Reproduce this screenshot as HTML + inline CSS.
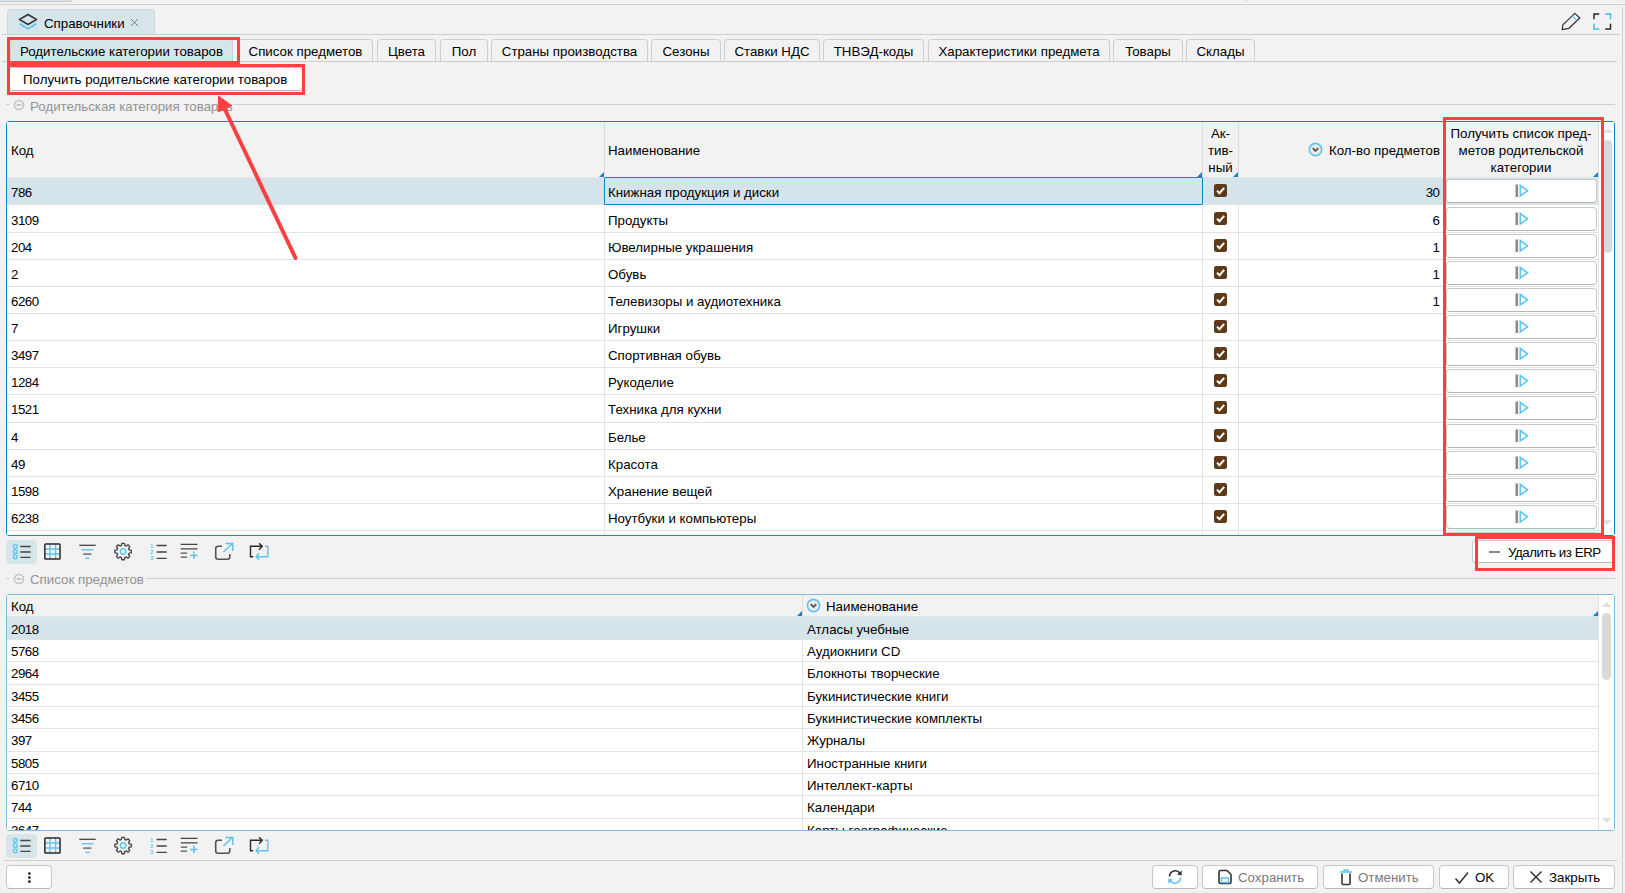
<!DOCTYPE html>
<html><head><meta charset="utf-8"><style>
html,body{margin:0;padding:0;}
body{width:1625px;height:893px;position:relative;overflow:hidden;background:#f2f2f2;font-family:"Liberation Sans",sans-serif;font-size:13.3px;color:#000;}
.t{position:absolute;white-space:nowrap;line-height:16px;}
.tab{position:absolute;top:39px;height:23px;box-sizing:border-box;border:1px solid #cfcfcf;border-bottom:none;border-radius:4px 4px 0 0;text-align:center;line-height:24px;white-space:nowrap;}
.btn{position:absolute;box-sizing:border-box;background:#fff;border:1px solid #c8c8c8;border-bottom-color:#b8b8b8;border-radius:4px;white-space:nowrap;}
.rbtn{position:absolute;width:151px;box-sizing:border-box;background:#fff;border:1px solid #c8c8c8;border-bottom-color:#b5b5b5;border-radius:4px;}
</style></head><body>
<div style="position:absolute;left:-2px;top:-2px;width:75px;height:4px;background:#d5e4e9;border:1px solid #c8c8c8;border-radius:0 0 4px 4px;box-sizing:border-box;"></div>
<div style="position:absolute;left:0px;top:4px;width:1625px;height:1px;background:#d0d0d0"></div>
<div style="position:absolute;left:1246px;top:0px;width:1px;height:2px;background:#cfcfcf"></div>
<div style="position:absolute;left:1622px;top:7px;width:1px;height:886px;background:#cfcfcf"></div>
<div style="position:absolute;left:7px;top:9px;width:148px;height:26px;background:#d5e5ea;border:1px solid #cfd6d9;border-bottom:none;border-radius:4px 4px 0 0;box-sizing:border-box;"></div>
<svg style="position:absolute;left:18px;top:13px;" width="20" height="18" viewBox="0 0 20 18"><path d="M10 1.5 L18.5 6.5 L10 11.5 L1.5 6.5 Z" fill="none" stroke="#363636" stroke-width="1.6" stroke-linejoin="round"/><path d="M1.7 10.7 L10 15.8 L18.3 10.7" fill="none" stroke="#5cc3ef" stroke-width="1.6" stroke-linejoin="round"/></svg>
<div class="t" style="left:44px;top:16px;">Справочники</div>
<svg style="position:absolute;left:130px;top:18px;" width="9" height="9" viewBox="0 0 9 9"><path d="M1 1 L8 8 M8 1 L1 8" stroke="#7a7a7a" stroke-width="1"/></svg>
<div style="position:absolute;left:2px;top:34px;width:1618px;height:1px;background:#cdcdcd"></div>
<svg style="position:absolute;left:1561px;top:12px;" width="21" height="21" viewBox="0 0 21 21"><path d="M13.8 1.4 L18.8 6 L8 16.3 L1.2 17.6 L1.8 12.9 Z" fill="none" stroke="#333" stroke-width="1.2" stroke-linejoin="round"/><path d="M11 3.9 L15.9 8.4" stroke="#5cc3ef" stroke-width="1.2"/></svg>
<svg style="position:absolute;left:1592px;top:12px;" width="21" height="21" viewBox="0 0 21 21"><path d="M2 7.3 V2 H7.3" fill="none" stroke="#2a2a2a" stroke-width="1.5"/><path d="M13.2 2 H18.5 V7.3" fill="none" stroke="#44bbef" stroke-width="1.5"/><path d="M2 11.7 V17 H7.3" fill="none" stroke="#44bbef" stroke-width="1.5"/><path d="M13.2 17 H18.5 V11.7" fill="none" stroke="#2a2a2a" stroke-width="1.5"/></svg>
<div class="tab" style="left:10px;width:223px;background:#d5e5ea">Родительские категории товаров</div>
<div class="tab" style="left:238px;width:135px;background:#f2f2f2">Список предметов</div>
<div class="tab" style="left:377px;width:59px;background:#f2f2f2">Цвета</div>
<div class="tab" style="left:440px;width:48px;background:#f2f2f2">Пол</div>
<div class="tab" style="left:491px;width:157px;background:#f2f2f2">Страны производства</div>
<div class="tab" style="left:651px;width:70px;background:#f2f2f2">Сезоны</div>
<div class="tab" style="left:724px;width:96px;background:#f2f2f2">Ставки НДС</div>
<div class="tab" style="left:823px;width:101px;background:#f2f2f2">ТНВЭД-коды</div>
<div class="tab" style="left:928px;width:182px;background:#f2f2f2">Характеристики предмета</div>
<div class="tab" style="left:1113px;width:70px;background:#f2f2f2">Товары</div>
<div class="tab" style="left:1186px;width:69px;background:#f2f2f2">Склады</div>
<div style="position:absolute;left:2px;top:61px;width:1615px;height:1px;background:#cdcdcd"></div>
<div class="btn" style="left:9px;top:67px;width:294px;height:24px;"><span style="position:absolute;left:13px;top:4px">Получить родительские категории товаров</span></div>
<div style="position:absolute;left:6px;top:104px;width:4px;height:1px;background:#cfcfcf"></div>
<svg style="position:absolute;left:13px;top:99px;" width="12" height="12" viewBox="0 0 12 12"><circle cx="6" cy="6" r="4.6" fill="none" stroke="#c2c2c2" stroke-width="1.5"/><path d="M3.6 6 H8.4" stroke="#bdbdbd" stroke-width="1.5"/></svg>
<div class="t" style="left:30px;top:99px;color:#939393">Родительская категория товаров</div>
<div style="position:absolute;left:233px;top:104px;width:1382px;height:1px;background:#cfcfcf"></div>
<div style="position:absolute;left:6px;top:121px;width:1609px;height:415px;border:1px solid #0b88c1;border-radius:3px;box-sizing:border-box;background:#fff;overflow:hidden"></div>
<div style="position:absolute;left:7px;top:122px;width:1607px;height:56px;background:#f2f2f2"></div>
<div style="position:absolute;left:604px;top:122px;width:1px;height:56px;background:#dcdcdc"></div>
<div style="position:absolute;left:1202px;top:122px;width:1px;height:56px;background:#dcdcdc"></div>
<div style="position:absolute;left:1238px;top:122px;width:1px;height:56px;background:#dcdcdc"></div>
<div style="position:absolute;left:1598px;top:122px;width:1px;height:56px;background:#dcdcdc"></div>
<svg style="position:absolute;left:599px;top:172px;" width="5" height="5" viewBox="0 0 5 5"><path d="M5 0 L5 5 L0 5 Z" fill="#0b88c1"/></svg>
<svg style="position:absolute;left:1197px;top:172px;" width="5" height="5" viewBox="0 0 5 5"><path d="M5 0 L5 5 L0 5 Z" fill="#0b88c1"/></svg>
<svg style="position:absolute;left:1233px;top:172px;" width="5" height="5" viewBox="0 0 5 5"><path d="M5 0 L5 5 L0 5 Z" fill="#0b88c1"/></svg>
<svg style="position:absolute;left:1593px;top:172px;" width="5" height="5" viewBox="0 0 5 5"><path d="M5 0 L5 5 L0 5 Z" fill="#0b88c1"/></svg>
<div class="t" style="left:11px;top:143px;">Код</div>
<div class="t" style="left:608px;top:143px;">Наименование</div>
<div class="t" style="left:1203px;width:35px;text-align:center;top:126px">Ак-</div>
<div class="t" style="left:1203px;width:35px;text-align:center;top:143px">тив-</div>
<div class="t" style="left:1203px;width:35px;text-align:center;top:160px">ный</div>
<svg style="position:absolute;left:1308px;top:142px;" width="15" height="15" viewBox="0 0 15 15"><circle cx="7.5" cy="7.5" r="6.1" fill="#ececec" stroke="#5ec4ee" stroke-width="1.6"/><path d="M4.7 6.2 L7.5 9.0 L10.3 6.2" fill="none" stroke="#555" stroke-width="1.8"/></svg>
<div class="t" style="left:1240px;width:200px;text-align:right;top:143px">Кол-во предметов</div>
<div class="t" style="left:1444px;width:154px;text-align:center;top:126px">Получить список пред-</div>
<div class="t" style="left:1444px;width:154px;text-align:center;top:143px">метов родительской</div>
<div class="t" style="left:1444px;width:154px;text-align:center;top:160px">категории</div>
<div style="position:absolute;left:7px;top:177px;width:1591px;height:28px;background:#d4e4ea"></div>
<div style="position:absolute;left:7px;top:205px;width:1591px;height:27px;background:#fff"></div>
<div style="position:absolute;left:7px;top:232px;width:1591px;height:27px;background:#fff"></div>
<div style="position:absolute;left:7px;top:259px;width:1591px;height:27px;background:#fff"></div>
<div style="position:absolute;left:7px;top:286px;width:1591px;height:27px;background:#fff"></div>
<div style="position:absolute;left:7px;top:313px;width:1591px;height:27px;background:#fff"></div>
<div style="position:absolute;left:7px;top:340px;width:1591px;height:27px;background:#fff"></div>
<div style="position:absolute;left:7px;top:367px;width:1591px;height:27px;background:#fff"></div>
<div style="position:absolute;left:7px;top:394px;width:1591px;height:28px;background:#fff"></div>
<div style="position:absolute;left:7px;top:422px;width:1591px;height:27px;background:#fff"></div>
<div style="position:absolute;left:7px;top:449px;width:1591px;height:27px;background:#fff"></div>
<div style="position:absolute;left:7px;top:476px;width:1591px;height:27px;background:#fff"></div>
<div style="position:absolute;left:7px;top:503px;width:1591px;height:27px;background:#fff"></div>
<div style="position:absolute;left:7px;top:530px;width:1591px;height:5px;background:#fff"></div>
<div style="position:absolute;left:7px;top:232px;width:1591px;height:1px;background:#e3e3e3"></div>
<div style="position:absolute;left:7px;top:259px;width:1591px;height:1px;background:#e3e3e3"></div>
<div style="position:absolute;left:7px;top:286px;width:1591px;height:1px;background:#e3e3e3"></div>
<div style="position:absolute;left:7px;top:313px;width:1591px;height:1px;background:#e3e3e3"></div>
<div style="position:absolute;left:7px;top:340px;width:1591px;height:1px;background:#e3e3e3"></div>
<div style="position:absolute;left:7px;top:367px;width:1591px;height:1px;background:#e3e3e3"></div>
<div style="position:absolute;left:7px;top:394px;width:1591px;height:1px;background:#e3e3e3"></div>
<div style="position:absolute;left:7px;top:422px;width:1591px;height:1px;background:#e3e3e3"></div>
<div style="position:absolute;left:7px;top:449px;width:1591px;height:1px;background:#e3e3e3"></div>
<div style="position:absolute;left:7px;top:476px;width:1591px;height:1px;background:#e3e3e3"></div>
<div style="position:absolute;left:7px;top:503px;width:1591px;height:1px;background:#e3e3e3"></div>
<div style="position:absolute;left:7px;top:530px;width:1591px;height:1px;background:#e3e3e3"></div>
<div style="position:absolute;left:7px;top:204px;width:1591px;height:1px;background:#e3e3e3"></div>
<div style="position:absolute;left:7px;top:177px;width:1591px;height:1px;background:#e6e6e6"></div>
<div style="position:absolute;left:604px;top:178px;width:1px;height:357px;background:#e3e3e3"></div>
<div style="position:absolute;left:1202px;top:178px;width:1px;height:357px;background:#e3e3e3"></div>
<div style="position:absolute;left:1238px;top:178px;width:1px;height:357px;background:#e3e3e3"></div>
<div style="position:absolute;left:1598px;top:178px;width:1px;height:357px;background:#e3e3e3"></div>
<div class="t" style="left:11px;top:185px;letter-spacing:-0.5px">786</div>
<div class="t" style="left:608px;top:185px;">Книжная продукция и диски</div>
<svg style="position:absolute;left:1214px;top:184px;" width="13" height="13" viewBox="0 0 13 13"><rect x="0" y="0" width="13" height="13" rx="2.2" fill="#5f3a18"/><path d="M3 6.6 L5.5 9.2 L10.2 3.9" fill="none" stroke="#fff" stroke-width="2"/></svg>
<div class="t" style="left:1299px;width:140px;text-align:right;top:185px;letter-spacing:-0.5px;margin-left:0.5px">30</div>
<div class="rbtn" style="left:1446px;top:179px;height:24px"></div>
<svg style="position:absolute;left:1513.5px;top:184px;" width="16" height="14" viewBox="0 0 16 14"><rect x="1.5" y="0.5" width="2.6" height="12.5" fill="#8a8a8a"/><path d="M6.3 1.5 L13.5 6.8 L6.3 12 Z" fill="none" stroke="#5ec4ee" stroke-width="1.6" stroke-linejoin="miter"/></svg>
<div class="t" style="left:11px;top:213px;letter-spacing:-0.5px">3109</div>
<div class="t" style="left:608px;top:213px;">Продукты</div>
<svg style="position:absolute;left:1214px;top:212px;" width="13" height="13" viewBox="0 0 13 13"><rect x="0" y="0" width="13" height="13" rx="2.2" fill="#5f3a18"/><path d="M3 6.6 L5.5 9.2 L10.2 3.9" fill="none" stroke="#fff" stroke-width="2"/></svg>
<div class="t" style="left:1299px;width:140px;text-align:right;top:213px;letter-spacing:-0.5px;margin-left:0.5px">6</div>
<div class="rbtn" style="left:1446px;top:207px;height:24px"></div>
<svg style="position:absolute;left:1513.5px;top:212px;" width="16" height="14" viewBox="0 0 16 14"><rect x="1.5" y="0.5" width="2.6" height="12.5" fill="#8a8a8a"/><path d="M6.3 1.5 L13.5 6.8 L6.3 12 Z" fill="none" stroke="#5ec4ee" stroke-width="1.6" stroke-linejoin="miter"/></svg>
<div class="t" style="left:11px;top:240px;letter-spacing:-0.5px">204</div>
<div class="t" style="left:608px;top:240px;">Ювелирные украшения</div>
<svg style="position:absolute;left:1214px;top:239px;" width="13" height="13" viewBox="0 0 13 13"><rect x="0" y="0" width="13" height="13" rx="2.2" fill="#5f3a18"/><path d="M3 6.6 L5.5 9.2 L10.2 3.9" fill="none" stroke="#fff" stroke-width="2"/></svg>
<div class="t" style="left:1299px;width:140px;text-align:right;top:240px;letter-spacing:-0.5px;margin-left:0.5px">1</div>
<div class="rbtn" style="left:1446px;top:234px;height:24px"></div>
<svg style="position:absolute;left:1513.5px;top:239px;" width="16" height="14" viewBox="0 0 16 14"><rect x="1.5" y="0.5" width="2.6" height="12.5" fill="#8a8a8a"/><path d="M6.3 1.5 L13.5 6.8 L6.3 12 Z" fill="none" stroke="#5ec4ee" stroke-width="1.6" stroke-linejoin="miter"/></svg>
<div class="t" style="left:11px;top:267px;letter-spacing:-0.5px">2</div>
<div class="t" style="left:608px;top:267px;">Обувь</div>
<svg style="position:absolute;left:1214px;top:266px;" width="13" height="13" viewBox="0 0 13 13"><rect x="0" y="0" width="13" height="13" rx="2.2" fill="#5f3a18"/><path d="M3 6.6 L5.5 9.2 L10.2 3.9" fill="none" stroke="#fff" stroke-width="2"/></svg>
<div class="t" style="left:1299px;width:140px;text-align:right;top:267px;letter-spacing:-0.5px;margin-left:0.5px">1</div>
<div class="rbtn" style="left:1446px;top:261px;height:24px"></div>
<svg style="position:absolute;left:1513.5px;top:266px;" width="16" height="14" viewBox="0 0 16 14"><rect x="1.5" y="0.5" width="2.6" height="12.5" fill="#8a8a8a"/><path d="M6.3 1.5 L13.5 6.8 L6.3 12 Z" fill="none" stroke="#5ec4ee" stroke-width="1.6" stroke-linejoin="miter"/></svg>
<div class="t" style="left:11px;top:294px;letter-spacing:-0.5px">6260</div>
<div class="t" style="left:608px;top:294px;">Телевизоры и аудиотехника</div>
<svg style="position:absolute;left:1214px;top:293px;" width="13" height="13" viewBox="0 0 13 13"><rect x="0" y="0" width="13" height="13" rx="2.2" fill="#5f3a18"/><path d="M3 6.6 L5.5 9.2 L10.2 3.9" fill="none" stroke="#fff" stroke-width="2"/></svg>
<div class="t" style="left:1299px;width:140px;text-align:right;top:294px;letter-spacing:-0.5px;margin-left:0.5px">1</div>
<div class="rbtn" style="left:1446px;top:288px;height:24px"></div>
<svg style="position:absolute;left:1513.5px;top:293px;" width="16" height="14" viewBox="0 0 16 14"><rect x="1.5" y="0.5" width="2.6" height="12.5" fill="#8a8a8a"/><path d="M6.3 1.5 L13.5 6.8 L6.3 12 Z" fill="none" stroke="#5ec4ee" stroke-width="1.6" stroke-linejoin="miter"/></svg>
<div class="t" style="left:11px;top:321px;letter-spacing:-0.5px">7</div>
<div class="t" style="left:608px;top:321px;">Игрушки</div>
<svg style="position:absolute;left:1214px;top:320px;" width="13" height="13" viewBox="0 0 13 13"><rect x="0" y="0" width="13" height="13" rx="2.2" fill="#5f3a18"/><path d="M3 6.6 L5.5 9.2 L10.2 3.9" fill="none" stroke="#fff" stroke-width="2"/></svg>
<div class="rbtn" style="left:1446px;top:315px;height:24px"></div>
<svg style="position:absolute;left:1513.5px;top:320px;" width="16" height="14" viewBox="0 0 16 14"><rect x="1.5" y="0.5" width="2.6" height="12.5" fill="#8a8a8a"/><path d="M6.3 1.5 L13.5 6.8 L6.3 12 Z" fill="none" stroke="#5ec4ee" stroke-width="1.6" stroke-linejoin="miter"/></svg>
<div class="t" style="left:11px;top:348px;letter-spacing:-0.5px">3497</div>
<div class="t" style="left:608px;top:348px;">Спортивная обувь</div>
<svg style="position:absolute;left:1214px;top:347px;" width="13" height="13" viewBox="0 0 13 13"><rect x="0" y="0" width="13" height="13" rx="2.2" fill="#5f3a18"/><path d="M3 6.6 L5.5 9.2 L10.2 3.9" fill="none" stroke="#fff" stroke-width="2"/></svg>
<div class="rbtn" style="left:1446px;top:342px;height:24px"></div>
<svg style="position:absolute;left:1513.5px;top:347px;" width="16" height="14" viewBox="0 0 16 14"><rect x="1.5" y="0.5" width="2.6" height="12.5" fill="#8a8a8a"/><path d="M6.3 1.5 L13.5 6.8 L6.3 12 Z" fill="none" stroke="#5ec4ee" stroke-width="1.6" stroke-linejoin="miter"/></svg>
<div class="t" style="left:11px;top:375px;letter-spacing:-0.5px">1284</div>
<div class="t" style="left:608px;top:375px;">Рукоделие</div>
<svg style="position:absolute;left:1214px;top:374px;" width="13" height="13" viewBox="0 0 13 13"><rect x="0" y="0" width="13" height="13" rx="2.2" fill="#5f3a18"/><path d="M3 6.6 L5.5 9.2 L10.2 3.9" fill="none" stroke="#fff" stroke-width="2"/></svg>
<div class="rbtn" style="left:1446px;top:369px;height:24px"></div>
<svg style="position:absolute;left:1513.5px;top:374px;" width="16" height="14" viewBox="0 0 16 14"><rect x="1.5" y="0.5" width="2.6" height="12.5" fill="#8a8a8a"/><path d="M6.3 1.5 L13.5 6.8 L6.3 12 Z" fill="none" stroke="#5ec4ee" stroke-width="1.6" stroke-linejoin="miter"/></svg>
<div class="t" style="left:11px;top:402px;letter-spacing:-0.5px">1521</div>
<div class="t" style="left:608px;top:402px;">Техника для кухни</div>
<svg style="position:absolute;left:1214px;top:401px;" width="13" height="13" viewBox="0 0 13 13"><rect x="0" y="0" width="13" height="13" rx="2.2" fill="#5f3a18"/><path d="M3 6.6 L5.5 9.2 L10.2 3.9" fill="none" stroke="#fff" stroke-width="2"/></svg>
<div class="rbtn" style="left:1446px;top:396px;height:24px"></div>
<svg style="position:absolute;left:1513.5px;top:401px;" width="16" height="14" viewBox="0 0 16 14"><rect x="1.5" y="0.5" width="2.6" height="12.5" fill="#8a8a8a"/><path d="M6.3 1.5 L13.5 6.8 L6.3 12 Z" fill="none" stroke="#5ec4ee" stroke-width="1.6" stroke-linejoin="miter"/></svg>
<div class="t" style="left:11px;top:430px;letter-spacing:-0.5px">4</div>
<div class="t" style="left:608px;top:430px;">Белье</div>
<svg style="position:absolute;left:1214px;top:429px;" width="13" height="13" viewBox="0 0 13 13"><rect x="0" y="0" width="13" height="13" rx="2.2" fill="#5f3a18"/><path d="M3 6.6 L5.5 9.2 L10.2 3.9" fill="none" stroke="#fff" stroke-width="2"/></svg>
<div class="rbtn" style="left:1446px;top:424px;height:24px"></div>
<svg style="position:absolute;left:1513.5px;top:429px;" width="16" height="14" viewBox="0 0 16 14"><rect x="1.5" y="0.5" width="2.6" height="12.5" fill="#8a8a8a"/><path d="M6.3 1.5 L13.5 6.8 L6.3 12 Z" fill="none" stroke="#5ec4ee" stroke-width="1.6" stroke-linejoin="miter"/></svg>
<div class="t" style="left:11px;top:457px;letter-spacing:-0.5px">49</div>
<div class="t" style="left:608px;top:457px;">Красота</div>
<svg style="position:absolute;left:1214px;top:456px;" width="13" height="13" viewBox="0 0 13 13"><rect x="0" y="0" width="13" height="13" rx="2.2" fill="#5f3a18"/><path d="M3 6.6 L5.5 9.2 L10.2 3.9" fill="none" stroke="#fff" stroke-width="2"/></svg>
<div class="rbtn" style="left:1446px;top:451px;height:24px"></div>
<svg style="position:absolute;left:1513.5px;top:456px;" width="16" height="14" viewBox="0 0 16 14"><rect x="1.5" y="0.5" width="2.6" height="12.5" fill="#8a8a8a"/><path d="M6.3 1.5 L13.5 6.8 L6.3 12 Z" fill="none" stroke="#5ec4ee" stroke-width="1.6" stroke-linejoin="miter"/></svg>
<div class="t" style="left:11px;top:484px;letter-spacing:-0.5px">1598</div>
<div class="t" style="left:608px;top:484px;">Хранение вещей</div>
<svg style="position:absolute;left:1214px;top:483px;" width="13" height="13" viewBox="0 0 13 13"><rect x="0" y="0" width="13" height="13" rx="2.2" fill="#5f3a18"/><path d="M3 6.6 L5.5 9.2 L10.2 3.9" fill="none" stroke="#fff" stroke-width="2"/></svg>
<div class="rbtn" style="left:1446px;top:478px;height:24px"></div>
<svg style="position:absolute;left:1513.5px;top:483px;" width="16" height="14" viewBox="0 0 16 14"><rect x="1.5" y="0.5" width="2.6" height="12.5" fill="#8a8a8a"/><path d="M6.3 1.5 L13.5 6.8 L6.3 12 Z" fill="none" stroke="#5ec4ee" stroke-width="1.6" stroke-linejoin="miter"/></svg>
<div class="t" style="left:11px;top:511px;letter-spacing:-0.5px">6238</div>
<div class="t" style="left:608px;top:511px;">Ноутбуки и компьютеры</div>
<svg style="position:absolute;left:1214px;top:510px;" width="13" height="13" viewBox="0 0 13 13"><rect x="0" y="0" width="13" height="13" rx="2.2" fill="#5f3a18"/><path d="M3 6.6 L5.5 9.2 L10.2 3.9" fill="none" stroke="#fff" stroke-width="2"/></svg>
<div class="rbtn" style="left:1446px;top:505px;height:24px"></div>
<svg style="position:absolute;left:1513.5px;top:510px;" width="16" height="14" viewBox="0 0 16 14"><rect x="1.5" y="0.5" width="2.6" height="12.5" fill="#8a8a8a"/><path d="M6.3 1.5 L13.5 6.8 L6.3 12 Z" fill="none" stroke="#5ec4ee" stroke-width="1.6" stroke-linejoin="miter"/></svg>
<div class="rbtn" style="left:1446px;top:532px;height:3px"></div>
<div style="position:absolute;left:604px;top:177px;width:599px;height:28px;border:1px solid #0b88c1;border-radius:1px;box-sizing:border-box"></div>
<div style="position:absolute;left:1599px;top:122px;width:15px;height:413px;background:#fff"></div>
<svg style="position:absolute;left:1602px;top:126px;" width="12" height="8" viewBox="0 0 12 8"><path d="M1 7 L6 2 L11 7 Z" fill="#e0e0e0"/></svg>
<div style="position:absolute;left:1603px;top:140px;width:9px;height:113px;background:#d9d9d9;border-radius:5px"></div>
<svg style="position:absolute;left:1601px;top:519px;" width="12" height="8" viewBox="0 0 12 8"><path d="M1 1 L6 6 L11 1 Z" fill="#e0e0e0"/></svg>
<div style="position:absolute;left:6px;top:540px;width:31px;height:24px;background:#d5e5ea;border-radius:4px"></div>
<svg style="position:absolute;left:10px;top:540px;" width="24" height="24" viewBox="0 0 24 24"><circle cx="5.3" cy="6.2" r="1.9" fill="none" stroke="#5ec4ee" stroke-width="1.3"/><circle cx="5.3" cy="11.5" r="1.9" fill="none" stroke="#5ec4ee" stroke-width="1.3"/><circle cx="5.3" cy="16.7" r="1.9" fill="none" stroke="#5ec4ee" stroke-width="1.3"/><path d="M10.3 6.5 H20.6 M10.3 12 H20.6 M10.3 17.3 H20.6" stroke="#444" stroke-width="1.3"/></svg>
<svg style="position:absolute;left:40px;top:540px;" width="24" height="24" viewBox="0 0 24 24"><path d="M10 3.5 V19 M15.6 3.5 V19 M4.5 9 H20 M4.5 14 H20" stroke="#5ec4ee" stroke-width="1.3"/><rect x="4.85" y="4.05" width="15.2" height="15" rx="0.8" fill="none" stroke="#2a2a2a" stroke-width="1.5"/></svg>
<svg style="position:absolute;left:76px;top:540px;" width="24" height="24" viewBox="0 0 24 24"><path d="M3.3 5.3 H19.7" stroke="#444" stroke-width="1.3"/><path d="M5.5 9.8 H17.5" stroke="#5ec4ee" stroke-width="1.4"/><path d="M7.2 14.1 H15.4" stroke="#555" stroke-width="1.3"/><path d="M9.3 18.4 H13.7" stroke="#5ec4ee" stroke-width="1.3"/></svg>
<svg style="position:absolute;left:111px;top:540px;" width="24" height="24" viewBox="0 0 24 24"><path d="M10.47 5.41 L10.80 3.30 L13.40 3.30 L13.73 5.41 L15.25 6.04 L16.98 4.79 L18.81 6.62 L17.56 8.35 L18.19 9.87 L20.30 10.20 L20.30 12.80 L18.19 13.13 L17.56 14.65 L18.81 16.38 L16.98 18.21 L15.25 16.96 L13.73 17.59 L13.40 19.70 L10.80 19.70 L10.47 17.59 L8.95 16.96 L7.22 18.21 L5.39 16.38 L6.64 14.65 L6.01 13.13 L3.90 12.80 L3.90 10.20 L6.01 9.87 L6.64 8.35 L5.39 6.62 L7.22 4.79 L8.95 6.04 Z" fill="none" stroke="#444" stroke-width="1.35" stroke-linejoin="round"/><circle cx="12.1" cy="11.5" r="2.7" fill="none" stroke="#5ec4ee" stroke-width="1.5"/></svg>
<svg style="position:absolute;left:147px;top:540px;" width="24" height="24" viewBox="0 0 24 24"><text x="4.6" y="7.5" text-anchor="middle" font-size="5.2" font-family="Liberation Sans" font-weight="bold" fill="#5ec4ee">1</text><text x="4.6" y="14" text-anchor="middle" font-size="5.2" font-family="Liberation Sans" font-weight="bold" fill="#5ec4ee">2</text><text x="4.6" y="20" text-anchor="middle" font-size="5.2" font-family="Liberation Sans" font-weight="bold" fill="#5ec4ee">3</text><path d="M9.6 5.5 H19.7 M9.6 12 H19.7 M9.6 18.4 H19.7" stroke="#444" stroke-width="1.3"/></svg>
<svg style="position:absolute;left:177px;top:540px;" width="24" height="24" viewBox="0 0 24 24"><path d="M3.7 4.4 H20.5 M3.7 8.8 H20.5" stroke="#444" stroke-width="1.3"/><path d="M3.7 13.1 H10.2 M3.7 17.1 H10.2" stroke="#555" stroke-width="1.3"/><path d="M13.2 15.4 H20.5 M16.9 11.6 V19" stroke="#5ec4ee" stroke-width="1.5"/></svg>
<svg style="position:absolute;left:212px;top:540px;" width="24" height="24" viewBox="0 0 24 24"><path d="M10 6.3 H6.2 Q3.7 6.3 3.7 8.8 V16.8 Q3.7 19.3 6.2 19.3 H15.3 Q17.8 19.3 17.8 16.8 V14" fill="none" stroke="#555" stroke-width="1.6"/><path d="M11.4 12 L20.6 3.3 M13.5 3.6 H20.8 V11" fill="none" stroke="#5ec4ee" stroke-width="1.5"/></svg>
<svg style="position:absolute;left:247px;top:540px;" width="24" height="24" viewBox="0 0 24 24"><path d="M6.2 16.7 H3.5 V6.3 H15 M12.1 3.3 L15.2 6.3 L12.1 9.8" fill="none" stroke="#2a2a2a" stroke-width="1.4"/><path d="M18 6.3 H20.8 V16.7 H9.5 M12.1 13.2 L9.1 16.7 L12.1 19.7" fill="none" stroke="#5ec4ee" stroke-width="1.4"/></svg>
<div class="btn" style="left:1472px;top:540px;width:142px;height:23px;"></div>
<div style="position:absolute;left:1489px;top:551px;width:11px;height:2px;background:#8a8a8a"></div>
<div class="t" style="left:1508px;top:545px;letter-spacing:-0.45px">Удалить из ERP</div>
<div style="position:absolute;left:6px;top:578px;width:4px;height:1px;background:#cfcfcf"></div>
<svg style="position:absolute;left:13px;top:573px;" width="12" height="12" viewBox="0 0 12 12"><circle cx="6" cy="6" r="4.6" fill="none" stroke="#c2c2c2" stroke-width="1.5"/><path d="M3.6 6 H8.4" stroke="#bdbdbd" stroke-width="1.5"/></svg>
<div class="t" style="left:30px;top:572px;color:#939393">Список предметов</div>
<div style="position:absolute;left:146px;top:578px;width:1469px;height:1px;background:#cfcfcf"></div>
<div style="position:absolute;left:6px;top:594px;width:1609px;height:237px;border:1px solid #7fbbd6;border-radius:3px;box-sizing:border-box;background:#fff;overflow:hidden"></div>
<div style="position:absolute;left:7px;top:595px;width:1591px;height:21px;background:#f2f2f2"></div>
<div style="position:absolute;left:1598px;top:595px;width:16px;height:235px;background:#fff"></div>
<div style="position:absolute;left:802px;top:595px;width:1px;height:21px;background:#dcdcdc"></div>
<div style="position:absolute;left:1598px;top:595px;width:1px;height:235px;background:#e3e3e3"></div>
<svg style="position:absolute;left:797px;top:611px;" width="5" height="5" viewBox="0 0 5 5"><path d="M5 0 L5 5 L0 5 Z" fill="#0b88c1"/></svg>
<svg style="position:absolute;left:1593px;top:611px;" width="5" height="5" viewBox="0 0 5 5"><path d="M5 0 L5 5 L0 5 Z" fill="#0b88c1"/></svg>
<div class="t" style="left:11px;top:599px;">Код</div>
<svg style="position:absolute;left:806px;top:598px;" width="15" height="15" viewBox="0 0 15 15"><circle cx="7.5" cy="7.5" r="6.1" fill="#ececec" stroke="#5ec4ee" stroke-width="1.6"/><path d="M4.7 6.2 L7.5 9.0 L10.3 6.2" fill="none" stroke="#555" stroke-width="1.8"/></svg>
<div class="t" style="left:826px;top:599px;">Наименование</div>
<div style="position:absolute;left:7px;top:617px;width:1591px;height:23px;background:#d4e4ea"></div>
<div style="position:absolute;left:7px;top:640px;width:1591px;height:22px;background:#fff"></div>
<div style="position:absolute;left:7px;top:662px;width:1591px;height:23px;background:#fff"></div>
<div style="position:absolute;left:7px;top:685px;width:1591px;height:22px;background:#fff"></div>
<div style="position:absolute;left:7px;top:707px;width:1591px;height:22px;background:#fff"></div>
<div style="position:absolute;left:7px;top:729px;width:1591px;height:23px;background:#fff"></div>
<div style="position:absolute;left:7px;top:752px;width:1591px;height:22px;background:#fff"></div>
<div style="position:absolute;left:7px;top:774px;width:1591px;height:22px;background:#fff"></div>
<div style="position:absolute;left:7px;top:796px;width:1591px;height:23px;background:#fff"></div>
<div style="position:absolute;left:7px;top:819px;width:1591px;height:11px;background:#fff"></div>
<div style="position:absolute;left:7px;top:616px;width:1591px;height:1px;background:#e6e6e6"></div>
<div style="position:absolute;left:7px;top:639px;width:1591px;height:1px;background:#e3e3e3"></div>
<div style="position:absolute;left:7px;top:661px;width:1591px;height:1px;background:#e3e3e3"></div>
<div style="position:absolute;left:7px;top:684px;width:1591px;height:1px;background:#e3e3e3"></div>
<div style="position:absolute;left:7px;top:706px;width:1591px;height:1px;background:#e3e3e3"></div>
<div style="position:absolute;left:7px;top:728px;width:1591px;height:1px;background:#e3e3e3"></div>
<div style="position:absolute;left:7px;top:751px;width:1591px;height:1px;background:#e3e3e3"></div>
<div style="position:absolute;left:7px;top:773px;width:1591px;height:1px;background:#e3e3e3"></div>
<div style="position:absolute;left:7px;top:795px;width:1591px;height:1px;background:#e3e3e3"></div>
<div style="position:absolute;left:7px;top:818px;width:1591px;height:1px;background:#e3e3e3"></div>
<div style="position:absolute;left:802px;top:616px;width:1px;height:214px;background:#e3e3e3"></div>
<div style="position:absolute;left:7px;top:595px;width:1591px;height:235px;overflow:hidden"><div class="t" style="left:4px;top:27px;letter-spacing:-0.5px">2018</div><div class="t" style="left:800px;top:27px">Атласы учебные</div></div>
<div style="position:absolute;left:7px;top:595px;width:1591px;height:235px;overflow:hidden"><div class="t" style="left:4px;top:49px;letter-spacing:-0.5px">5768</div><div class="t" style="left:800px;top:49px">Аудиокниги CD</div></div>
<div style="position:absolute;left:7px;top:595px;width:1591px;height:235px;overflow:hidden"><div class="t" style="left:4px;top:71px;letter-spacing:-0.5px">2964</div><div class="t" style="left:800px;top:71px">Блокноты творческие</div></div>
<div style="position:absolute;left:7px;top:595px;width:1591px;height:235px;overflow:hidden"><div class="t" style="left:4px;top:94px;letter-spacing:-0.5px">3455</div><div class="t" style="left:800px;top:94px">Букинистические книги</div></div>
<div style="position:absolute;left:7px;top:595px;width:1591px;height:235px;overflow:hidden"><div class="t" style="left:4px;top:116px;letter-spacing:-0.5px">3456</div><div class="t" style="left:800px;top:116px">Букинистические комплекты</div></div>
<div style="position:absolute;left:7px;top:595px;width:1591px;height:235px;overflow:hidden"><div class="t" style="left:4px;top:138px;letter-spacing:-0.5px">397</div><div class="t" style="left:800px;top:138px">Журналы</div></div>
<div style="position:absolute;left:7px;top:595px;width:1591px;height:235px;overflow:hidden"><div class="t" style="left:4px;top:161px;letter-spacing:-0.5px">5805</div><div class="t" style="left:800px;top:161px">Иностранные книги</div></div>
<div style="position:absolute;left:7px;top:595px;width:1591px;height:235px;overflow:hidden"><div class="t" style="left:4px;top:183px;letter-spacing:-0.5px">6710</div><div class="t" style="left:800px;top:183px">Интеллект-карты</div></div>
<div style="position:absolute;left:7px;top:595px;width:1591px;height:235px;overflow:hidden"><div class="t" style="left:4px;top:205px;letter-spacing:-0.5px">744</div><div class="t" style="left:800px;top:205px">Календари</div></div>
<div style="position:absolute;left:7px;top:595px;width:1591px;height:235px;overflow:hidden"><div class="t" style="left:4px;top:228px;letter-spacing:-0.5px">3647</div><div class="t" style="left:800px;top:228px">Карты географические</div></div>
<svg style="position:absolute;left:1600px;top:600px;" width="14" height="8" viewBox="0 0 14 8"><path d="M1.5 7 L6.5 2 L11.5 7 Z" fill="#e0e0e0"/></svg>
<div style="position:absolute;left:1602px;top:613px;width:9px;height:67px;background:#d9d9d9;border-radius:5px"></div>
<svg style="position:absolute;left:1600px;top:817px;" width="14" height="8" viewBox="0 0 14 8"><path d="M1.5 1 L6.5 6 L11.5 1 Z" fill="#e0e0e0"/></svg>
<div style="position:absolute;left:6px;top:834px;width:31px;height:24px;background:#d5e5ea;border-radius:4px"></div>
<svg style="position:absolute;left:10px;top:834px;" width="24" height="24" viewBox="0 0 24 24"><circle cx="5.3" cy="6.2" r="1.9" fill="none" stroke="#5ec4ee" stroke-width="1.3"/><circle cx="5.3" cy="11.5" r="1.9" fill="none" stroke="#5ec4ee" stroke-width="1.3"/><circle cx="5.3" cy="16.7" r="1.9" fill="none" stroke="#5ec4ee" stroke-width="1.3"/><path d="M10.3 6.5 H20.6 M10.3 12 H20.6 M10.3 17.3 H20.6" stroke="#444" stroke-width="1.3"/></svg>
<svg style="position:absolute;left:40px;top:834px;" width="24" height="24" viewBox="0 0 24 24"><path d="M10 3.5 V19 M15.6 3.5 V19 M4.5 9 H20 M4.5 14 H20" stroke="#5ec4ee" stroke-width="1.3"/><rect x="4.85" y="4.05" width="15.2" height="15" rx="0.8" fill="none" stroke="#2a2a2a" stroke-width="1.5"/></svg>
<svg style="position:absolute;left:76px;top:834px;" width="24" height="24" viewBox="0 0 24 24"><path d="M3.3 5.3 H19.7" stroke="#444" stroke-width="1.3"/><path d="M5.5 9.8 H17.5" stroke="#5ec4ee" stroke-width="1.4"/><path d="M7.2 14.1 H15.4" stroke="#555" stroke-width="1.3"/><path d="M9.3 18.4 H13.7" stroke="#5ec4ee" stroke-width="1.3"/></svg>
<svg style="position:absolute;left:111px;top:834px;" width="24" height="24" viewBox="0 0 24 24"><path d="M10.47 5.41 L10.80 3.30 L13.40 3.30 L13.73 5.41 L15.25 6.04 L16.98 4.79 L18.81 6.62 L17.56 8.35 L18.19 9.87 L20.30 10.20 L20.30 12.80 L18.19 13.13 L17.56 14.65 L18.81 16.38 L16.98 18.21 L15.25 16.96 L13.73 17.59 L13.40 19.70 L10.80 19.70 L10.47 17.59 L8.95 16.96 L7.22 18.21 L5.39 16.38 L6.64 14.65 L6.01 13.13 L3.90 12.80 L3.90 10.20 L6.01 9.87 L6.64 8.35 L5.39 6.62 L7.22 4.79 L8.95 6.04 Z" fill="none" stroke="#444" stroke-width="1.35" stroke-linejoin="round"/><circle cx="12.1" cy="11.5" r="2.7" fill="none" stroke="#5ec4ee" stroke-width="1.5"/></svg>
<svg style="position:absolute;left:147px;top:834px;" width="24" height="24" viewBox="0 0 24 24"><text x="4.6" y="7.5" text-anchor="middle" font-size="5.2" font-family="Liberation Sans" font-weight="bold" fill="#5ec4ee">1</text><text x="4.6" y="14" text-anchor="middle" font-size="5.2" font-family="Liberation Sans" font-weight="bold" fill="#5ec4ee">2</text><text x="4.6" y="20" text-anchor="middle" font-size="5.2" font-family="Liberation Sans" font-weight="bold" fill="#5ec4ee">3</text><path d="M9.6 5.5 H19.7 M9.6 12 H19.7 M9.6 18.4 H19.7" stroke="#444" stroke-width="1.3"/></svg>
<svg style="position:absolute;left:177px;top:834px;" width="24" height="24" viewBox="0 0 24 24"><path d="M3.7 4.4 H20.5 M3.7 8.8 H20.5" stroke="#444" stroke-width="1.3"/><path d="M3.7 13.1 H10.2 M3.7 17.1 H10.2" stroke="#555" stroke-width="1.3"/><path d="M13.2 15.4 H20.5 M16.9 11.6 V19" stroke="#5ec4ee" stroke-width="1.5"/></svg>
<svg style="position:absolute;left:212px;top:834px;" width="24" height="24" viewBox="0 0 24 24"><path d="M10 6.3 H6.2 Q3.7 6.3 3.7 8.8 V16.8 Q3.7 19.3 6.2 19.3 H15.3 Q17.8 19.3 17.8 16.8 V14" fill="none" stroke="#555" stroke-width="1.6"/><path d="M11.4 12 L20.6 3.3 M13.5 3.6 H20.8 V11" fill="none" stroke="#5ec4ee" stroke-width="1.5"/></svg>
<svg style="position:absolute;left:247px;top:834px;" width="24" height="24" viewBox="0 0 24 24"><path d="M6.2 16.7 H3.5 V6.3 H15 M12.1 3.3 L15.2 6.3 L12.1 9.8" fill="none" stroke="#2a2a2a" stroke-width="1.4"/><path d="M18 6.3 H20.8 V16.7 H9.5 M12.1 13.2 L9.1 16.7 L12.1 19.7" fill="none" stroke="#5ec4ee" stroke-width="1.4"/></svg>
<div style="position:absolute;left:4px;top:860px;width:1613px;height:1px;background:#cfcfcf"></div>
<div class="btn" style="left:6px;top:865px;width:46px;height:24px;"></div>
<svg style="position:absolute;left:26px;top:870px;" width="6" height="14" viewBox="0 0 6 14"><circle cx="3.4" cy="3.5" r="1.3" fill="#111"/><circle cx="3.4" cy="7.6" r="1.3" fill="#111"/><circle cx="3.4" cy="11.6" r="1.3" fill="#111"/></svg>
<div class="btn" style="left:1152px;top:865px;width:46px;height:24px;"></div>
<svg style="position:absolute;left:1166px;top:868px;" width="18" height="18" viewBox="0 0 18 18"><path d="M3.5 8.5 A5.8 5.8 0 0 1 14 5.2" fill="none" stroke="#333" stroke-width="1.6"/><path d="M15.8 2.4 L15.6 7.4 L11 6.6 Z" fill="#333"/><path d="M14.5 9.5 A5.8 5.8 0 0 1 4 12.8" fill="none" stroke="#5ec4ee" stroke-width="1.6"/><path d="M2.2 15.6 L2.4 10.6 L7 11.4 Z" fill="#5ec4ee"/></svg>
<div class="btn" style="left:1202px;top:865px;width:116px;height:24px;"></div>
<svg style="position:absolute;left:1217px;top:869px;" width="16" height="16" viewBox="0 0 16 16"><path d="M2 3 Q2 1.5 3.5 1.5 H10 L14 5.5 V13 Q14 14.5 12.5 14.5 H3.5 Q2 14.5 2 13 Z" fill="none" stroke="#333" stroke-width="1.6"/><path d="M4.5 9 H11.5 V13.5 H4.5 Z" fill="none" stroke="#5ec4ee" stroke-width="1.4"/></svg>
<div class="t" style="left:1238px;top:870px;color:#7a7a7a">Сохранить</div>
<div class="btn" style="left:1323px;top:865px;width:111px;height:24px;"></div>
<svg style="position:absolute;left:1338px;top:868px;" width="16" height="18" viewBox="0 0 16 18"><path d="M2 4 H14 M6 4 V2 H10 V4" fill="none" stroke="#5ec4ee" stroke-width="1.4"/><path d="M4 5.5 V15.5 Q4 16.5 5 16.5 H11 Q12 16.5 12 15.5 V5.5" fill="none" stroke="#333" stroke-width="1.6"/></svg>
<div class="t" style="left:1358px;top:870px;color:#7a7a7a">Отменить</div>
<div class="btn" style="left:1439px;top:865px;width:70px;height:24px;"></div>
<svg style="position:absolute;left:1454px;top:871px;" width="16" height="14" viewBox="0 0 16 14"><path d="M1.5 7.5 L5.5 12 L14 1.5" fill="none" stroke="#333" stroke-width="1.5"/></svg>
<div class="t" style="left:1475px;top:870px;">OK</div>
<div class="btn" style="left:1513px;top:865px;width:102px;height:24px;"></div>
<svg style="position:absolute;left:1529px;top:870px;" width="14" height="14" viewBox="0 0 14 14"><path d="M1.5 1.5 L12.5 12.5 M12.5 1.5 L1.5 12.5" stroke="#333" stroke-width="1.5"/></svg>
<div class="t" style="left:1549px;top:870px;">Закрыть</div>
<div style="position:absolute;left:7px;top:37px;width:233px;height:27px;border:3px solid #fc3f3f;box-sizing:border-box"></div>
<div style="position:absolute;left:7px;top:64px;width:298px;height:31px;border:3px solid #fc3f3f;box-sizing:border-box"></div>
<div style="position:absolute;left:1443px;top:117px;width:161px;height:419px;border:3px solid #fc3f3f;box-sizing:border-box"></div>
<div style="position:absolute;left:1475px;top:536px;width:140px;height:35px;border:3px solid #fc3f3f;box-sizing:border-box"></div>
<svg style="position:absolute;left:0px;top:0px;pointer-events:none" width="1625" height="893" viewBox="0 0 1625 893"><path d="M295.5 258 L224.5 108.5" stroke="#fc3f3f" stroke-width="3.9" stroke-linecap="round"/><path d="M218.5 96 L231.4 105.4 L218.1 112 Z" fill="#fc3f3f" stroke="#fc3f3f" stroke-width="1" stroke-linejoin="round"/></svg>
</body></html>
